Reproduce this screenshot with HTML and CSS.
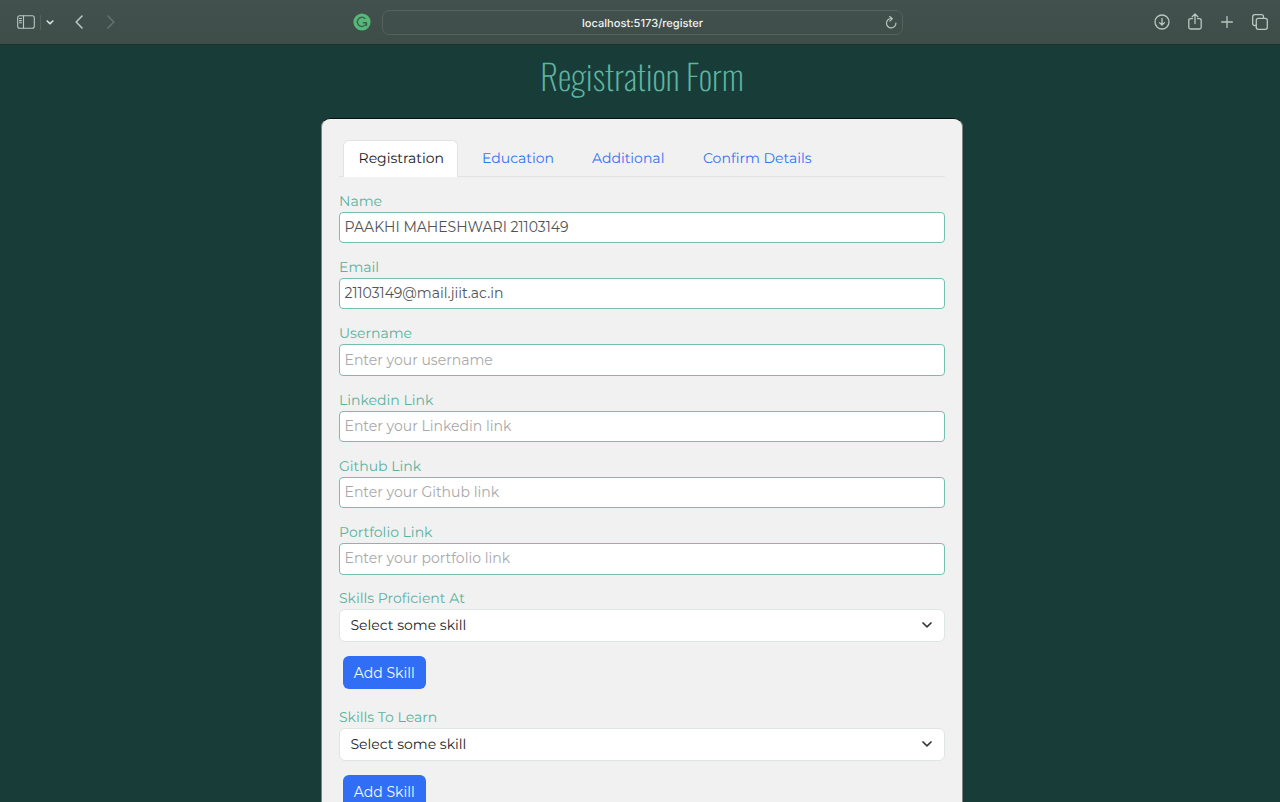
FILE: index.html
```html
<!DOCTYPE html>
<html lang="en">
<head>
<meta charset="utf-8">
<title>Registration Form</title>
<link rel="stylesheet" href="styles.css">
</head>
<body>
<header class="toolbar">
  <div class="nav-group">
    <svg class="icon sidebar-icon" width="18" height="14" viewBox="0 0 18 14"><rect x=".7" y=".7" width="16.6" height="12.6" rx="2"/><path d="M6.5 1v12M2.5 3.5h2M2.5 5.6h2M2.5 7.7h2"/></svg>
    <span class="divider"></span>
    <svg class="icon chevron-down" width="8" height="5" viewBox="0 0 8 5"><path d="M1.2 1 4 3.8 6.8 1"/></svg>
    <svg class="icon back" width="8" height="14" viewBox="0 0 8 14"><path d="M7 1 1.2 7 7 13"/></svg>
    <svg class="icon forward" width="8" height="14" viewBox="0 0 8 14"><path d="M1 1 6.8 7 1 13"/></svg>
  </div>
  <div class="address-group">
    <svg class="grammar" width="18" height="18" viewBox="0 0 18 18"><circle cx="9" cy="9" r="8.6" fill="#56b879"/><path d="M12.3 5.7A4.6 4.6 0 1 0 13.2 10.6M9.8 9.8h3.7v3.4" fill="none" stroke="#3f6552" stroke-width="1.4"/></svg>
    <div class="address"><span class="url">localhost:5173/register</span>
      <svg class="icon reload" width="12" height="13" viewBox="0 0 12 13"><path d="M6.5 2.5A4.7 4.7 0 1 0 10.9 7M4.7.5l2.7 2.2-2.5 2.5"/></svg>
    </div>
  </div>
  <div class="actions">
    <svg class="icon" width="16" height="16" viewBox="0 0 16 16"><circle cx="8" cy="8" r="7"/><path d="M8 4.5v6.3M5.5 8.6 8 11l2.5-2.4"/></svg>
    <svg class="icon share" width="14" height="17" viewBox="0 0 14 17"><path d="M4.5 5.6H2.6Q.8 5.6.8 7.4v6.8Q.8 16 2.6 16h8.8q1.8 0 1.8-1.8V7.4q0-1.8-1.8-1.8H9.5M7 10.5V1M4.2 3.7 7 .9l2.8 2.8"/></svg>
    <svg class="icon plus" width="12" height="12" viewBox="0 0 12 12"><path d="M6 .6v10.8M.6 6h10.8"/></svg>
    <svg class="icon" width="16" height="16" viewBox="0 0 16 16"><rect x="4.3" y="4.3" width="11" height="11" rx="2"/><path d="M4.3 11.5H2.7q-2 0-2-2V2.7q0-2 2-2h6.8q2 0 2 2v1.6"/></svg>
  </div>
</header>
<main class="page">
  <h1 class="title">Registration Form</h1>
  <section class="card">
    <nav class="tabs">
      <a class="tab active">Registration</a>
      <a class="tab education">Education</a>
      <a class="tab additional">Additional</a>
      <a class="tab confirm">Confirm Details</a>
    </nav>
    <form class="form">
      <div class="field"><label class="label">Name</label><input class="input full-name" value="PAAKHI MAHESHWARI 21103149"></div>
      <div class="field"><label class="label">Email</label><input class="input email" value="21103149@mail.jiit.ac.in"></div>
      <div class="field"><label class="label">Username</label><input class="input" placeholder="Enter your username"></div>
      <div class="field"><label class="label">Linkedin Link</label><input class="input" placeholder="Enter your Linkedin link"></div>
      <div class="field"><label class="label">Github Link</label><input class="input" placeholder="Enter your Github link"></div>
      <div class="field"><label class="label">Portfolio Link</label><input class="input" placeholder="Enter your portfolio link"></div>
      <div class="skills"><label class="label">Skills Proficient At</label>
        <div class="select"><span>Select some skill</span><svg width="12" height="8" viewBox="0 0 12 8"><path d="M1.9 1.9 6 5.9l4.1-4"/></svg></div>
        <button class="add" type="button">Add Skill</button></div>
      <div class="skills"><label class="label">Skills To Learn</label>
        <div class="select"><span>Select some skill</span><svg width="12" height="8" viewBox="0 0 12 8"><path d="M1.9 1.9 6 5.9l4.1-4"/></svg></div>
        <button class="add" type="button">Add Skill</button></div>
    </form>
  </section>
</main>
</body>
</html>
```
FILE: styles.css
```css
* { box-sizing: border-box; }
body { margin: 0; height: 802px; overflow: hidden; background: #183d39; font-family: Montserrat, Inter, sans-serif; font-size: 14.03px; font-weight: 430; text-rendering: geometricPrecision; }
.toolbar { height: 45px; display: grid; grid-template-columns: 353px 550px 1fr; align-items: center; background: linear-gradient(#43514e, #3f4d49); border-bottom: 1px solid #202e2b; }
.icon { display: block; fill: none; stroke: #b9c7c1; stroke-width: 1.3; stroke-linecap: round; stroke-linejoin: round; }
.nav-group { display: flex; align-items: center; padding-left: 17px; }
.sidebar-icon { stroke-width: 1.1; }
.divider { width: 1px; height: 15px; margin: 0 5px; background: #53615d; }
.chevron-down { stroke: #dce5e1; stroke-width: 1.6; }
.back { margin-left: 21px; stroke-width: 1.6; }
.forward { margin-left: 24px; stroke: #65736f; stroke-width: 1.5; }
.address-group { display: flex; align-items: center; }
.grammar { display: block; margin-right: 11px; }
.address { width: 521px; height: 25px; border: 1px solid #53625d; border-radius: 7px; display: grid; grid-template-columns: 1fr 12px; align-items: center; padding: 0 5px 0 17px; }
.url { padding-top: 1px; text-align: center; color: #edf2ef; font: 500 11.1px Inter, sans-serif; }
.reload { stroke-width: 1.2; margin-top: 1px; }
.actions { display: flex; align-items: center; justify-content: flex-end; padding-right: 12px; }
.share { margin-left: 18px; margin-top: -2px; }
.plus { margin: 0 19px 0 19px; }
.page { display: flex; flex-direction: column; align-items: center; padding-left: 4px; }
.title { margin: 0; height: 73px; padding-top: 8px; font: 230 34.8px/46px Oswald, "Open Sans", sans-serif; color: #5fb5a0; white-space: nowrap; }
.card { width: 642px; height: 720px; background: #f1f1f1; border: 1px solid #0c201d; border-bottom: 0; border-color: #07110f #798581 #798581; border-radius: 9px 9px 0 0; padding: 21px 17px 0; }
.tabs { height: 37px; display: flex; border-bottom: 1px solid #e1e4e6; padding-left: 4px; }
.tab { height: 37px; padding-top: 9px; line-height: 18px; color: #3174f3; white-space: nowrap; }
.active { width: 115px; padding: 8px 0 0 14.5px; background: #fff; color: #17191b; border: 1px solid #e1e4e6; border-bottom: 0; border-radius: 6px 6px 0 0; }
.education { width: 110px; margin-left: 24px; }
.additional { width: 111px; }
.form { padding-top: 14.7px; }
.field { height: 66.3px; }
.label { display: block; height: 20px; line-height: 19px; color: #5ab29e; }
.input { display: block; width: 100%; height: 31.5px; padding: 0 4.5px 1px; background: #fff; border: 1px solid #75bfae; border-radius: 4px; font: inherit; color: #515456; outline: 0; }
.input::placeholder { color: #a8a9a9; opacity: 1; }
.skills { height: 118.7px; }
.select { height: 33px; padding: 0 11px 1px 10.5px; display: flex; align-items: center; justify-content: space-between; background: #fff; border: 1px solid #dfe4e6; border-radius: 6px; color: #212529; }
.select svg { fill: none; stroke: #343a40; stroke-width: 1.5; stroke-linecap: round; stroke-linejoin: round; }
.add { display: block; width: 83.5px; height: 33px; margin: 14px 0 0 3.5px; padding: 0; border: 0; border-radius: 6px; background: #306ef5; color: #f6f9ff; font: inherit; }
```
